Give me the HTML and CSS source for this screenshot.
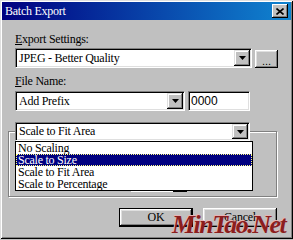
FILE: index.html
```html
<!doctype html>
<html lang="en">
  <head>
    <meta charset="utf-8">
    <title>Batch Export</title>
    <link rel="stylesheet" href="styles.css">
  </head>
  <body>
    <div class="window">
      <div class="titlebar">
        <span class="title">Batch Export</span>
        <span class="close">
          <svg width="8" height="7" viewBox="0 0 8 7"><path d="M0.5 0.5 L7.5 6.5 M7.5 0.5 L0.5 6.5" stroke="#000" stroke-width="1.6" fill="none"/></svg>
        </span>
      </div>

      <div class="content">
        <div class="label"><u>E</u>xport Settings:</div>
        <div class="row">
          <div class="combo wide">
            <span class="value">JPEG - Better Quality</span>
            <span class="drop"><svg width="7" height="4" viewBox="0 0 7 4"><polygon points="0,0 7,0 3.5,4" fill="#000"/></svg></span>
          </div>
          <button class="btn small">...</button>
        </div>

        <div class="label second"><u>F</u>ile Name:</div>
        <div class="row">
          <div class="combo mid">
            <span class="value">Add Prefix</span>
            <span class="drop"><svg width="7" height="4" viewBox="0 0 7 4"><polygon points="0,0 7,0 3.5,4" fill="#000"/></svg></span>
          </div>
          <div class="field">0000</div>
        </div>

        <div class="group">
          <div class="scale-select">
            <div class="combo scale">
              <span class="value">Scale to Fit Area</span>
              <span class="drop"><svg width="7" height="4" viewBox="0 0 7 4"><polygon points="0,0 7,0 3.5,4" fill="#000"/></svg></span>
            </div>
            <ul class="list">
              <li>No Scaling</li>
              <li class="selected">Scale to Size</li>
              <li>Scale to Fit Area</li>
              <li>Scale to Percentage</li>
            </ul>
          </div>
          <div class="group-frame">
            <div class="peek"><span class="peek-field"></span><span class="peek-btn"></span></div>
          </div>
        </div>

        <div class="buttons">
          <button class="btn default">OK</button>
          <button class="btn">Cancel</button>
        </div>
      </div>

      <div class="watermark">MinTao.Net</div>
    </div>
  </body>
</html>
```

FILE: styles.css
```css
body {
  margin: 0;
  font-family: "Liberation Serif", serif;
  font-size: 12px;
  letter-spacing: -0.25px;
  background: #c0c0c0;
}

.window {
  position: relative;
  width: 293px;
  height: 239px;
  box-sizing: border-box;
  padding: 2px;
  background: #c0c0c0;
  box-shadow: inset 1px 1px #dfdfdf, inset -1px -1px #000,
              inset 2px 2px #fff, inset -2px -2px #808080;
  display: flex;
  flex-direction: column;
}

.titlebar {
  height: 18px;
  display: flex;
  align-items: center;
  justify-content: space-between;
  padding: 0 3px;
  background: linear-gradient(to right, #000080, #1084d0);
  color: #fff;
}

.close {
  width: 16px;
  height: 14px;
  box-sizing: border-box;
  background: #c0c0c0;
  box-shadow: inset -1px -1px #000, inset 1px 1px #fff, inset -2px -2px #808080;
  display: flex;
  align-items: center;
  justify-content: center;
}

.content {
  display: flex;
  flex-direction: column;
  padding: 12px 13px 0 13px;
}

.label {
  height: 14px;
  line-height: 14px;
  margin-bottom: 2px;
}
.label.second {
  margin-top: 6px;
  margin-bottom: 3px;
}

.row {
  display: flex;
  align-items: flex-end;
  gap: 3px;
}

.combo, .field {
  box-sizing: border-box;
  height: 20px;
  background: #fff;
  border: 1px solid;
  border-color: #808080 #fff #fff #808080;
  box-shadow: inset 1px 1px #000, inset -1px -1px #dfdfdf;
  padding: 1px;
  display: flex;
  align-items: center;
}

.combo .value {
  flex: 1;
  padding-left: 2px;
  white-space: nowrap;
}

.combo .drop {
  width: 16px;
  height: 100%;
  box-sizing: border-box;
  background: #c0c0c0;
  box-shadow: inset -1px -1px #000, inset 1px 1px #dfdfdf,
              inset -2px -2px #808080, inset 2px 2px #fff;
  display: flex;
  align-items: center;
  justify-content: center;
}

.combo.wide { width: 237px; }
.combo.mid { width: 170px; }
.combo.scale { width: 235px; height: 19px; }

.field {
  width: 62px;
  font-family: "Liberation Sans", sans-serif;
  letter-spacing: 0;
  padding-left: 2px;
}

.btn {
  width: 74px;
  height: 19px;
  box-sizing: border-box;
  border: 0;
  padding: 0;
  background: #c0c0c0;
  box-shadow: inset -1px -1px #000, inset 1px 1px #fff,
              inset -2px -2px #808080, inset 2px 2px #dfdfdf;
  font-family: "Liberation Serif", serif;
  font-size: 12px;
  letter-spacing: -0.25px;
  color: #000;
}
.btn.small {
  width: 23px;
  height: 18px;
  font-family: "Liberation Sans", sans-serif;
  font-size: 11px;
  letter-spacing: 0;
  padding-top: 3px;
}
.btn.default {
  border: 1px solid #000;
}

/* group box: the scaling combo sits on the frame's top edge */
.group {
  margin: 11px 0 0 -7px;
  width: 269px;
  display: flex;
  flex-direction: column;
}

.scale-select {
  position: relative;
  z-index: 1;
  margin-left: 7px;
  width: 235px;
}

.group-frame {
  margin-top: -10px;
  height: 66px;
  box-sizing: border-box;
  border: 1px solid #808080;
  box-shadow: 1px 1px #fff, inset 1px 1px #fff;
}

.list {
  position: absolute;
  top: 19px;
  left: 0;
  width: 238px;
  margin: 0;
  padding: 0;
  list-style: none;
  box-sizing: border-box;
  border: 1px solid #000;
  background: #fff;
}
.list li {
  height: 12px;
  line-height: 12px;
  padding-left: 2px;
  white-space: nowrap;
}
.list li.selected {
  background: #000080;
  color: #fff;
  outline: 1px dotted #ffff80;
  outline-offset: -1px;
}

.peek {
  display: flex;
  margin: 58px 0 0 122px;
  height: 2px;
}
.peek-field { width: 42px; background: #fff; }
.peek-btn { width: 14px; background: #000; }

.buttons {
  display: flex;
  justify-content: flex-end;
  gap: 10px;
  margin-top: 11px;
  padding-right: 1px;
}

.watermark {
  position: absolute;
  left: 172px;
  top: 212px;
  font-family: "Liberation Serif", serif;
  font-weight: bold;
  font-style: italic;
  font-size: 26px;
  line-height: 26px;
  letter-spacing: -1.5px;
  color: #8b1e1e;
  text-shadow: -1px -1px 0 #e6b4b4;
}
```
